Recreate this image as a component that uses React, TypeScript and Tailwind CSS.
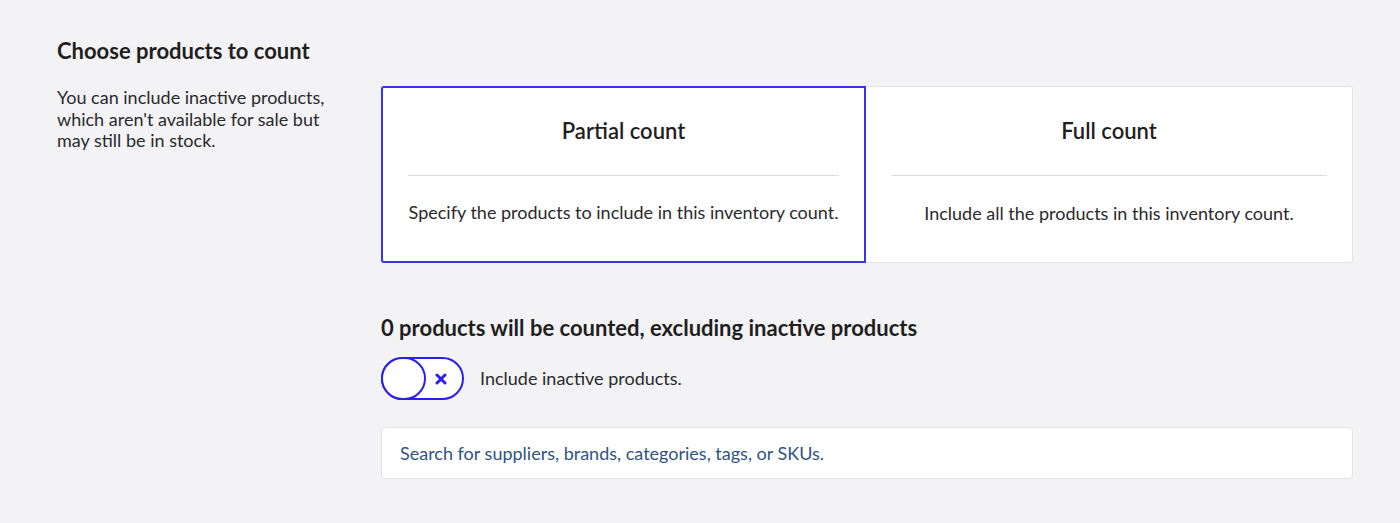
import React from "react";

export default function App() {
  return (
    <div className="min-h-[523px] w-full bg-[#f3f2f5] text-[#1f1f21]" style={{ fontFamily: "Lato, 'Noto Sans', sans-serif" }}>
      <div className="flex pl-[57px] pr-[47px] pt-[38px]">
        <div className="w-[324px] shrink-0">
          <h2 className="text-[22px] font-bold leading-[26px] text-[#1f1f21]">Choose products to count</h2>
          <p className="mt-[23px] w-[275px] text-[18px] leading-[21.5px] text-[#2a2a2c]">
            You can include inactive products, which aren't available for sale but may still be in stock.
          </p>
        </div>
        <div className="flex-1 pt-[48px]">
          <div className="flex h-[177px]">
            <div className="flex w-[485px] flex-col rounded-l-[3px] border-2 border-[#3b30f5] bg-white px-[25px]">
              <div className="flex h-[88px] items-center justify-center border-b border-[#dcdbde] pb-[2px] text-[22px] font-semibold text-[#1f1f21]">
                Partial count
              </div>
              <div className="flex flex-1 items-center justify-center pb-[12px] text-[18px] text-[#2a2a2c]">
                Specify the products to include in this inventory count.
              </div>
            </div>
            <div className="flex flex-1 flex-col rounded-r-[3px] border border-l-0 border-[#e4e3e6] bg-white px-[25px]">
              <div className="flex h-[89px] items-center justify-center border-b border-[#dcdbde] pb-[2px] text-[22px] font-semibold text-[#1f1f21]">
                Full count
              </div>
              <div className="flex flex-1 items-center justify-center pb-[12px] text-[18px] text-[#2a2a2c]">
                Include all the products in this inventory count.
              </div>
            </div>
          </div>

          <h3 className="mt-[52px] text-[22px] font-bold leading-[26px] text-[#1f1f21]">
            0 products will be counted, excluding inactive products
          </h3>
          <div className="mt-[16px] flex items-center gap-[16px]">
            <div className="relative flex h-[43px] w-[83px] items-center rounded-full border-2 border-[#2a1ff0] bg-white">
              <div className="absolute left-[-2px] top-[-2px] h-[43px] w-[45px] rounded-full border-2 border-[#2a1ff0] bg-white" />
              <svg className="absolute left-[52px] top-[14px]" width="12" height="12" viewBox="0 0 12 12">
                <path d="M2 2 L10 10 M10 2 L2 10" stroke="#2a1ff0" strokeWidth="3" strokeLinecap="round" />
              </svg>
            </div>
            <span className="text-[18px] text-[#2a2a2c]">Include inactive products.</span>
          </div>

          <div className="mt-[27px] flex h-[52px] items-center rounded-[4px] border border-[#e4e3e6] bg-white px-[18px] text-[18px] text-[#2f5482]">
            Search for suppliers, brands, categories, tags, or SKUs.
          </div>
        </div>
      </div>
    </div>
  );
}
